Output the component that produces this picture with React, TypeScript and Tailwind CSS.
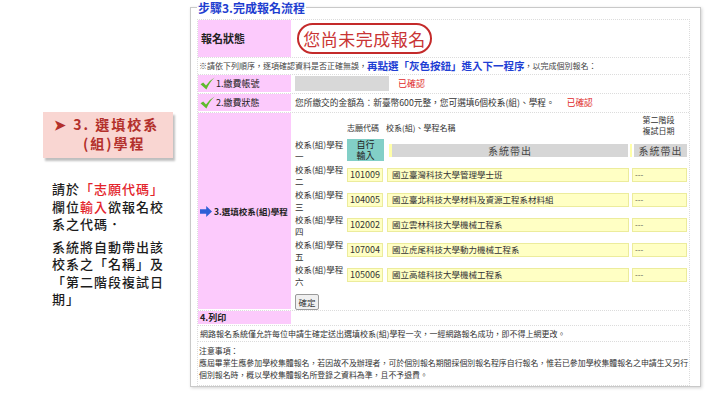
import React from 'react'

const pink = 'bg-[#fccafc]'

function Check() {
  return (
    <svg width="15" height="13" viewBox="0 0 15 13" className="mr-[1px] shrink-0">
      <path d="M0.5 7.2 L3.2 5.6 L6 8.6 Q9.2 3.4 14.6 0.4 Q10 4.6 6.4 12.4 Z" fill="#5dbb2c" />
    </svg>
  )
}

function BlueArrow() {
  return (
    <svg width="12" height="11" viewBox="0 0 12 11" className="mr-[2px] shrink-0">
      <path d="M0 3.2 H6.2 V0 L12 5.5 L6.2 11 V7.8 H0 Z" fill="#2d5fd6" />
    </svg>
  )
}

const picks = [
  { no: '二', code: '101009', name: '國立臺灣科技大學管理學士班' },
  { no: '三', code: '104005', name: '國立臺北科技大學材料及資源工程系材料組' },
  { no: '四', code: '102002', name: '國立雲林科技大學機械工程系' },
  { no: '五', code: '107004', name: '國立虎尾科技大學動力機械工程系' },
  { no: '六', code: '105006', name: '國立高雄科技大學機械工程系' },
]

function RowLabel({ no }: { no: string }) {
  return (
    <div className="w-[52px] shrink-0 text-[8.5px] leading-[12px] text-[#333]">
      校系(組)學程
      <br />
      {no}
    </div>
  )
}

export default function App() {
  return (
    <div className="flex h-[393px] w-[718px] overflow-hidden bg-white font-['Noto_Sans_CJK_TC',sans-serif] text-[#222]">
      <aside className="w-[190px] shrink-0">
        <div className="ml-[43px] mt-[112px] h-[46px] w-[130px] bg-[#f9d6d2] pt-[3px] text-[14px] font-bold leading-[19px] tracking-[2px] text-[#b3302b] shadow-[2px_3px_2px_rgba(0,0,0,0.25)]">
          <div className="pl-[11px]">➤ 3. 選填校系</div>
          <div className="pl-[40px]">(組)學程</div>
        </div>
        <div className="ml-[52px] mt-[22px] text-[13px] font-medium leading-[17.5px] tracking-[1px] text-[#1c1c1c]">
          <p>
            請於<span className="text-[#e3242b]">「志願代碼」</span>
            <br />
            欄位<span className="text-[#e3242b]">輸入</span>欲報名校
            <br />
            系之代碼．
          </p>
          <p className="mt-[5px]">
            系統將自動帶出該
            <br />
            校系之「名稱」及
            <br />
            「第二階段複試日
            <br />
            期」
          </p>
        </div>
      </aside>

      <main>
        <fieldset className="h-[387px] w-[509px] border border-[#c9c9c9] pl-[6px] pr-[10px] shadow-[1px_1px_3px_rgba(0,0,0,0.18)]">
          <legend className="px-[1px] text-[12px] font-bold leading-[15px] text-[#1e3ed0]">
            步驟3.完成報名流程
          </legend>
          <div className="mt-[4px] border border-dotted border-[#dcdcdc]">
            <div className="flex h-[38px] items-center border-b border-dotted border-[#dcdcdc]">
              <div className={`${pink} flex h-full w-[93px] items-center pl-[3px] text-[11px] font-bold`}>
                報名狀態
              </div>
              <div className="ml-[6px] flex h-[31px] w-[135px] items-center justify-center rounded-full border-2 border-[#c42a2a] text-[17px] tracking-[0.5px] text-[#c93434]">
                您尚未完成報名
              </div>
            </div>

            <div className="flex h-[17px] items-center whitespace-nowrap border-b border-dotted border-[#dcdcdc] pl-[1px] text-[8px] text-[#444]">
              ※請依下列順序，逐項確認資料是否正確無誤，
              <span className="text-[10.5px] font-bold text-[#1f3fd4]">再點選「灰色按鈕」進入下一程序</span>
              ，以完成個別報名：
            </div>

            <div className="flex h-[19px] items-stretch border-b border-dotted border-[#dcdcdc] pb-[1px]">
              <div className={`${pink} flex w-[93px] items-center pl-[2px] text-[9px]`}>
                <Check />
                1.繳費帳號
              </div>
              <div className="my-[1px] ml-[4px] w-[94px] bg-[#d8d8d8]" />
              <div className="ml-[9px] flex items-center text-[9px] text-[#e02a2a]">已確認</div>
            </div>

            <div className="flex h-[19px] items-stretch border-b border-dotted border-[#dcdcdc] pb-[1px]">
              <div className={`${pink} flex w-[93px] items-center pl-[2px] text-[9px]`}>
                <Check />
                2.繳費狀態
              </div>
              <div className="ml-[4px] flex items-center whitespace-nowrap text-[8.7px] text-[#333]">
                您所繳交的金額為：新臺幣600元整，您可選填6個校系(組)、學程。
                <span className="ml-[12px] text-[#e02a2a]">已確認</span>
              </div>
            </div>

            <div className="flex h-[198px] items-stretch border-b border-dotted border-[#dcdcdc] pb-[1px]">
              <div className={`${pink} flex w-[93px] items-center pl-[2px] text-[8.5px] font-bold`}>
                <BlueArrow />
                3.選填校系(組)學程
              </div>
              <div className="ml-[4px] w-[394px]">
                <div className="flex h-[25px] items-end pb-[4px] text-[8px] text-[#333]">
                  <div className="w-[52px]" />
                  <div className="w-[39px]">志願代碼</div>
                  <div className="w-[245px]">校系(組)、學程名稱</div>
                  <div className="mb-[-2px] w-[55px] text-center leading-[11px]">
                    第二階段
                    <br />
                    複試日期
                  </div>
                </div>

                <div className="flex h-[24px] items-center">
                  <RowLabel no="一" />
                  <div className="flex h-[22px] w-[37px] flex-col items-center justify-center bg-[#82cfc7] text-[9px] leading-[11px] text-[#222]">
                    <span>自行</span>
                    <span>輸入</span>
                  </div>
                  <div className="ml-[5px] flex h-[13px] w-[239px]">
                    <div className="w-[3px] bg-[#ffffa8]" />
                    <div className="flex flex-1 items-center justify-center bg-[#d6d6d6] text-[10px] tracking-[1px] text-[#444]">
                      系統帶出
                    </div>
                  </div>
                  <div className="ml-[2px] flex h-[13px] w-[57px]">
                    <div className="w-[2px] bg-[#ffffa8]" />
                    <div className="ml-[2px] flex flex-1 items-center justify-center bg-[#d6d6d6] text-[10px] tracking-[1px] text-[#444]">
                      系統帶出
                    </div>
                  </div>
                </div>

                {picks.map((p) => (
                  <div key={p.no} className="flex h-[25px] items-center">
                    <RowLabel no={p.no} />
                    <div className="flex h-[14px] w-[36px] items-center border border-[#ecec9c] bg-[#ffffc4] pl-[2px] text-[9px] text-[#333]">
                      {p.code}
                    </div>
                    <div className="ml-[4px] flex h-[14px] w-[242px] items-center border border-[#ecec9c] bg-[#ffffc4] pl-[4px] text-[8.5px] text-[#333]">
                      {p.name}
                    </div>
                    <div className="ml-[3px] flex h-[14px] w-[55px] items-center border border-[#ecec9c] bg-[#ffffc4] pl-[2px] text-[8px] text-[#555]">
                      ---
                    </div>
                  </div>
                ))}

                <button className="mt-[3px] h-[16px] w-[24px] rounded-[2px] border border-[#9a9a9a] bg-[#f0f0f0] text-[8.5px] leading-[14px] text-[#333]">
                  確定
                </button>
              </div>
            </div>

            <div className="flex h-[15px] border-b border-dotted border-[#dcdcdc] pb-[1px]">
              <div className={`${pink} flex w-[93px] items-center pl-[2px] text-[9px] font-bold`}>4.列印</div>
            </div>

            <div className="flex h-[16px] items-center border-b border-dotted border-[#dcdcdc] pl-[2px] text-[8px] text-[#333]">
              網路報名系統僅允許每位申請生確定送出選填校系(組)學程一次，一經網路報名成功，即不得上網更改。
            </div>

            <div className="whitespace-nowrap pb-[4px] pl-[1px] pt-[3px] text-[7.9px] leading-[12px] text-[#333]">
              <div>注意事項：</div>
              <div>
                應屆畢業生應參加學校集體報名，若因故不及辦理者，可於個別報名期間採個別報名程序自行報名，惟若已參加學校集體報名之申請生又另行
              </div>
              <div>個別報名時，概以學校集體報名所登錄之資料為準，且不予退費。</div>
            </div>
          </div>
        </fieldset>
      </main>
    </div>
  )
}
